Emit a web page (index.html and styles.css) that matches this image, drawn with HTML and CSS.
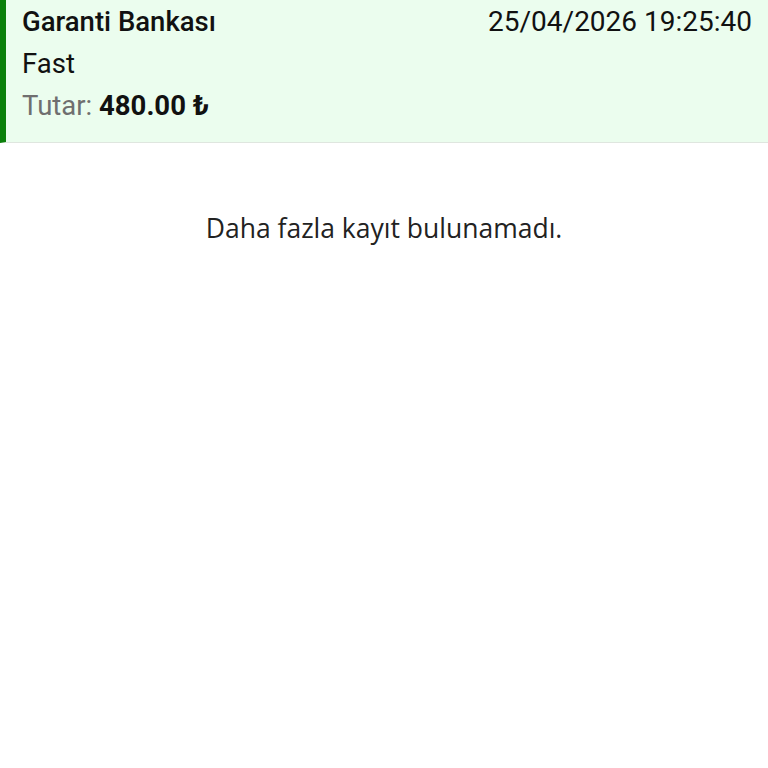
FILE: index.html
```html
<!DOCTYPE html>
<html lang="tr">
<head>
  <meta charset="UTF-8" />
  <meta name="viewport" content="width=device-width, initial-scale=1.0"/>
  <title>Hareketler</title>
  <link rel="stylesheet" href="styles.css">
</head>
<body>

  <!-- Kayit karti -->
  <div class="record">
    <div class="record-top">
      <span class="bank">Garanti Bankası</span>
      <span class="date">25/04/2026 19:25:40</span>
    </div>
    <div class="type">Fast</div>
    <div class="amount"><span class="label">Tutar:</span> <b>480.00 ₺</b></div>
  </div>

  <!-- Liste sonu -->
  <p class="empty">Daha fazla kayıt bulunamadı.</p>

</body>
</html>
```

FILE: styles.css
```css
body {
  margin: 0;
  background: white;
  font-family: Roboto, 'Noto Sans', sans-serif;
  color: #111;
}

.record {
  background: #ebfdee;
  border-left: 6px solid #0b800b;
  border-bottom: 1px solid #dfe6df;
  padding: 1px 16px 15px 16px;
  font-size: 27.5px;
  line-height: 42px;
}

.record-top {
  display: flex;
  justify-content: space-between;
  align-items: baseline;
}

.bank {
  font-weight: 500;
}

.date {
  font-size: 28px;
}

.amount .label {
  color: #6f6f6f;
}

.amount b {
  font-weight: 700;
}

.empty {
  margin: 67px 0 0;
  text-align: center;
  font-family: 'Open Sans', Roboto, sans-serif;
  font-size: 26.5px;
  color: #222;
}
```
